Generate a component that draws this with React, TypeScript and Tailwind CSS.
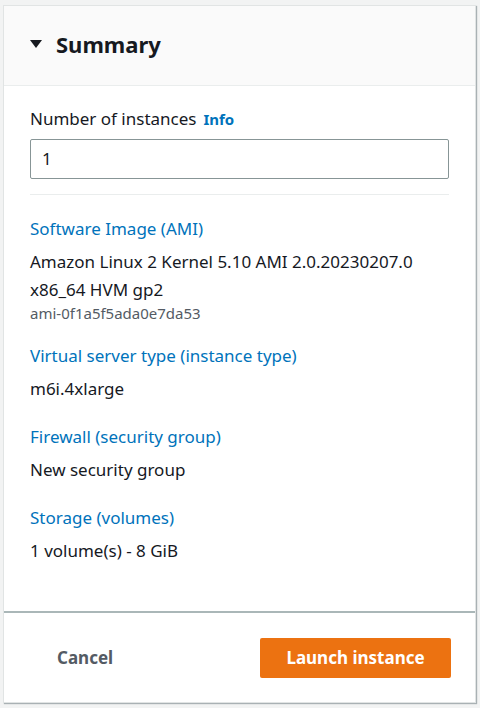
export default function App() {
  const items = [
    { label: "Software Image (AMI)", lines: ["Amazon Linux 2 Kernel 5.10 AMI 2.0.20230207.0", "x86_64 HVM gp2"], sub: "ami-0f1a5f5ada0e7da53" },
    { label: "Virtual server type (instance type)", lines: ["m6i.4xlarge"] },
    { label: "Firewall (security group)", lines: ["New security group"] },
    { label: "Storage (volumes)", lines: ["1 volume(s) - 8 GiB"] },
  ]

  return (
    <div className="w-[480px] h-[708px] bg-[#f2f3f3] pt-[5px] pl-[3px] pr-[4px] pb-[5px] font-['Noto_Sans',sans-serif] text-[#16191f]">
      <div className="flex h-full flex-col border border-[#e1e4e4] bg-white shadow-[1px_1px_1px_0_rgba(0,28,36,0.3)]">
        {/* Header */}
        <div className="flex h-[80px] items-center gap-[14px] border-b border-[#eaeded] bg-[#fafafa] pb-[4px] pl-[26px]">
          <svg width="12" height="10" viewBox="0 0 12 10" className="mt-[1px]">
            <path d="M0 1h12L6 9z" fill="#16191f" />
          </svg>
          <h2 className="text-[22px] font-bold leading-none">Summary</h2>
        </div>

        {/* Body */}
        <div className="flex-1 px-[26px] pt-[22px]">
          <div className="flex items-baseline gap-[7px]">
            <span className="text-[17px] leading-[22px]">Number of instances</span>
            <span className="text-[15px] font-bold text-[#0073bb]">Info</span>
          </div>
          <div className="mt-[8px] flex h-[40px] items-center rounded-[2px] border border-[#879596] px-[11px] text-[17px]">
            1
          </div>
          <div className="mt-[15px] border-t border-[#eaeded]" />

          <div className="mt-[22px] flex flex-col gap-[22px]">
            {items.map((it) => (
              <div key={it.label}>
                <div className="text-[17px] leading-[24px] text-[#0073bb]">{it.label}</div>
                <div className="mt-[7px] text-[17px] leading-[28px]">
                  {it.lines.map((l) => (
                    <div key={l}>{l}</div>
                  ))}
                </div>
                {it.sub && <div className="text-[15px] leading-[18px] text-[#545b64]">{it.sub}</div>}
              </div>
            ))}
          </div>
        </div>

        {/* Footer */}
        <div className="flex h-[91px] items-center justify-between border-t-2 border-[#aab7b8] pl-[53px] pr-[24px]">
          <button className="text-[17px] font-bold text-[#545b64]">Cancel</button>
          <button className="h-[40px] w-[191px] rounded-[2px] bg-[#ec7211] text-[17px] font-bold text-white">
            Launch instance
          </button>
        </div>
      </div>
    </div>
  )
}
